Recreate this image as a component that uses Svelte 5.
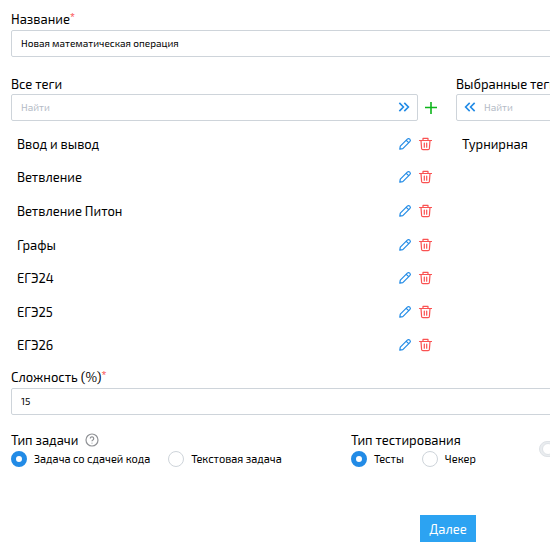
<script>
  const tags = ['Ввод и вывод', 'Ветвление', 'Ветвление Питон', 'Графы', 'ЕГЭ24', 'ЕГЭ25', 'ЕГЭ26'];
  const selected = ['Турнирная'];
  let title = $state('Новая математическая операция');
  let level = $state('15');
  let taskType = $state('code');
  let checkType = $state('tests');
</script>

{#snippet chevrons(left)}
  <svg class="chevrons" class:left viewBox="0 0 24 24" aria-hidden="true">
    <path d="M4 5l7 7-7 7M12.500 5l7 7-7 7" />
  </svg>
{/snippet}

<main>
  <form>
    <div class="field">
      <label for="title">Название<span class="star">*</span></label>
      <input id="title" class="box" bind:value={title} />
    </div>

    <div class="transfer">
      <section>
        <label for="find-all">Все теги</label>
        <div class="search">
          <div class="box">
            <input id="find-all" placeholder="Найти" />
            <button type="button" class="icon" aria-label="Выбрать все">{@render chevrons(false)}</button>
          </div>
          <button type="button" class="icon add" aria-label="Добавить тег">
            <svg viewBox="0 0 14 14"><path d="M7 1v12M1 6.500h12" /></svg>
          </button>
        </div>
        <ul>
          {#each tags as tag}
            <li>
              <span>{tag}</span>
              <button type="button" class="icon edit" aria-label="Изменить">
                <svg viewBox="0 0 14 14"><path d="M1.8 12.2l.5-3 7-7a1.7 1.7 0 0 1 2.5 2.5l-7 7zM8.3 3.3l2.4 2.4" /></svg>
              </button>
              <button type="button" class="icon remove" aria-label="Удалить">
                <svg viewBox="0 0 14 14"><path d="M1.500 3.5h12M5 3.2V1.4h5v1.8M3 3.6l.6 7.9q.1 1.2 1.3 1.2h5.2q1.2 0 1.3-1.2l.6-7.9M6.3 6v4.2M8.7 6v4.2" /></svg>
              </button>
            </li>
          {/each}
        </ul>
      </section>
      <section>
        <label for="find-selected">Выбранные теги</label>
        <div class="search">
          <div class="box">
            <button type="button" class="icon" aria-label="Убрать все">{@render chevrons(true)}</button>
            <input id="find-selected" placeholder="Найти" />
          </div>
        </div>
        <ul class="chosen">
          {#each selected as tag}
            <li><span>{tag}</span></li>
          {/each}
        </ul>
      </section>
    </div>

    <div class="field">
      <label for="level">Сложность (%)<span class="star">*</span></label>
      <input id="level" class="box" bind:value={level} />
    </div>

    <div class="options">
      <fieldset>
        <legend>
          Тип задачи
          <svg class="help" viewBox="0 0 14 14" aria-hidden="true">
            <circle cx="7" cy="7" r="6" />
            <path d="M5.3 5.6a1.7 1.7 0 1 1 2.6 1.4q-.9.5-.9 1.3M7 9.7v.8" />
          </svg>
        </legend>
        <div class="radios">
          <label><input type="radio" name="task" value="code" bind:group={taskType} />Задача со сдачей кода</label>
          <label><input type="radio" name="task" value="text" bind:group={taskType} />Текстовая задача</label>
        </div>
      </fieldset>
      <fieldset>
        <legend>Тип тестирования</legend>
        <div class="radios">
          <label><input type="radio" name="check" value="tests" bind:group={checkType} />Тесты</label>
          <label><input type="radio" name="check" value="checker" bind:group={checkType} />Чекер</label>
        </div>
      </fieldset>
      <input type="checkbox" class="switch" aria-label="Переключатель" />
    </div>

    <button type="submit" class="next">Далее</button>
  </form>
</main>

<style>
  :global(body) {
    background: #fff;
  }
  main {
    overflow: hidden;
    color: #000;
    font: 13px/20px 'Exo 2', 'Noto Sans', sans-serif;
  }
  form {
    box-sizing: border-box;
    min-width: 896px;
    padding: 9px 11px 8px;
  }
  input,
  button {
    box-sizing: border-box;
    margin: 0;
    font-family: inherit;
  }
  .field,
  section {
    display: flex;
    flex-direction: column;
  }
  .field > label {
    align-self: flex-start;
    height: 21px;
  }
  section > label {
    align-self: flex-start;
    height: 20px;
  }
  .star {
    color: #fa5252;
    font-size: 11px;
    font-weight: 600;
    line-height: 1;
    vertical-align: 3px;
  }
  .box {
    display: flex;
    box-sizing: border-box;
    flex: 1;
    align-items: center;
    min-height: 27px;
    padding: 0 9px 2px;
    border: 1px solid #ced4da;
    border-radius: 2px;
    background: #fff;
    color: #000;
    font-size: 10px;
  }
  .box input {
    flex: 1;
    min-width: 0;
    padding: 0;
    border: 0;
    outline: 0;
    background: none;
    font-size: 10px;
  }
  ::placeholder {
    color: #b4bbc6;
    opacity: 1;
  }
  .transfer {
    display: grid;
    grid-template-columns: 1fr 1fr;
    gap: 16px;
    margin-top: 17px;
  }
  section:first-child {
    padding-right: 2px;
  }
  .search {
    display: flex;
    gap: 6px;
  }
  .search .box {
    gap: 7px;
    padding: 0 6px 2px 9px;
  }
  .icon {
    display: flex;
    padding: 0;
    border: 0;
    background: none;
    color: #228be6;
    cursor: pointer;
  }
  .icon svg {
    width: 14px;
    height: 14px;
    fill: none;
    stroke: currentColor;
    stroke-linecap: round;
    stroke-linejoin: round;
    stroke-width: 1.2;
  }
  .icon .chevrons {
    stroke-linecap: butt;
    stroke-linejoin: miter;
    stroke-width: 2.8;
  }
  .left {
    transform: scaleX(-1);
  }
  section + section .search .box {
    padding-left: 6px;
  }
  .icon.add {
    align-items: center;
    color: #0db51b;
  }
  .add svg {
    stroke-linecap: butt;
    stroke-width: 1.6;
  }
  .icon.remove {
    color: #fa5252;
  }
  ul {
    display: flex;
    flex-direction: column;
    height: 235px;
    margin: 6px 0 0;
    padding: 0 6px;
    list-style: none;
  }
  li {
    display: flex;
    flex: 1;
    gap: 6px;
    align-items: center;
  }
  .chosen li {
    flex: 0 0 34px;
  }
  li span {
    flex: 1;
  }
  .transfer + .field {
    margin-top: 5px;
  }
  .options {
    display: grid;
    grid-template-columns: 340px 188px 1fr;
    margin-top: 15px;
  }
  fieldset {
    min-width: 0;
    margin: 0;
    padding: 0;
    border: 0;
  }
  legend {
    display: flex;
    gap: 7px;
    align-items: center;
    height: 20px;
    padding: 0;
  }
  .help {
    width: 14px;
    height: 14px;
    fill: none;
    stroke: #909296;
    stroke-width: 1.2;
  }
  .radios {
    display: flex;
    gap: 18px;
  }
  .radios label {
    display: flex;
    gap: 7px;
    align-items: center;
    height: 18px;
    font-size: 11px;
  }
  .radios input {
    width: 16px;
    height: 16px;
    border: 1px solid #ced4da;
    border-radius: 50%;
    background: #fff;
    appearance: none;
  }
  .radios input:checked {
    border: 5px solid #228be6;
  }
  .switch {
    position: relative;
    align-self: center;
    width: 32px;
    height: 16px;
    border: 1px solid #dee2e6;
    border-radius: 8px;
    background: #e9ecef;
    appearance: none;
  }
  .switch::before {
    position: absolute;
    top: 1px;
    left: 2px;
    box-sizing: border-box;
    width: 12px;
    height: 12px;
    border: 1px solid #dee2e6;
    border-radius: 50%;
    background: #fff;
    content: '';
  }
  .next {
    display: block;
    height: 27px;
    margin: 47px auto 0;
    padding: 0 9px;
    border: 0;
    background: #2ca3f2;
    color: #fff;
    font-size: 13px;
  }
</style>
